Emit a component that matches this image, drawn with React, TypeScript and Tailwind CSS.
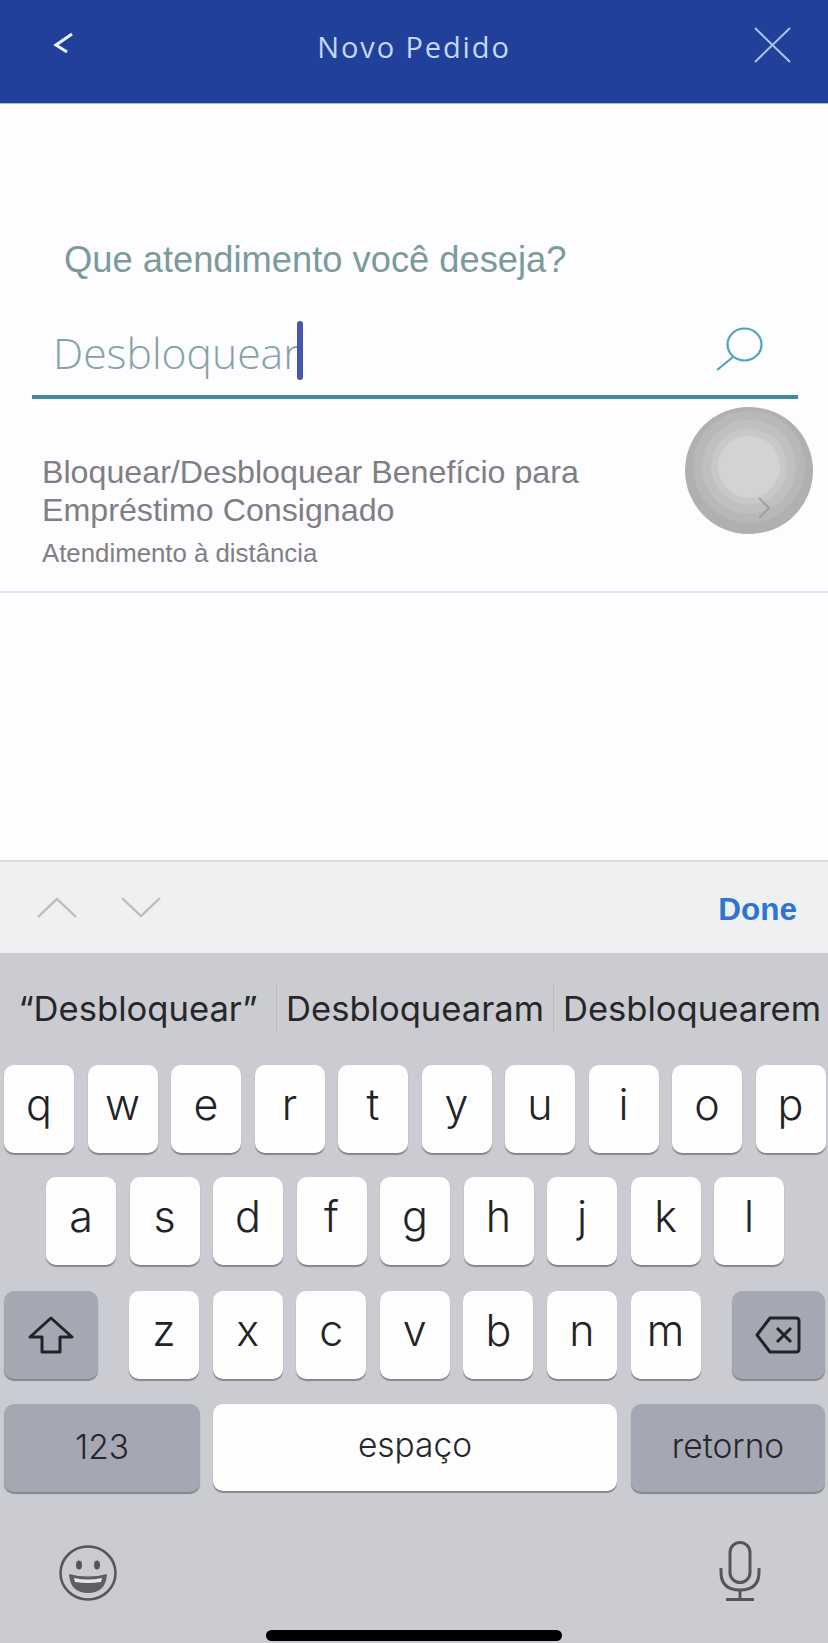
import React from 'react';

const row1 = ['q', 'w', 'e', 'r', 't', 'y', 'u', 'i', 'o', 'p'];
const row2 = ['a', 's', 'd', 'f', 'g', 'h', 'j', 'k', 'l'];
const row3 = ['z', 'x', 'c', 'v', 'b', 'n', 'm'];

function LetterKey({ label }: { label: string }) {
  return (
    <div className="w-[70px] h-[88px] shrink-0 flex items-center justify-center rounded-[10px] bg-[#fefefe] shadow-[0_2px_1px_#85868b] font-['Inter',sans-serif] text-[43px] leading-none font-light text-[#222326] pb-[9px]">
      {label}
    </div>
  );
}

export default function App() {
  return (
    <div className="w-[828px] h-[1643px] flex flex-col overflow-hidden bg-[#fdfcfe] font-['Liberation_Sans',sans-serif]">
      {/* header */}
      <header className="h-[104px] shrink-0 flex items-start justify-between pl-[53px] pr-[37px] bg-[#21409a] border-b border-[#a9bbe0]">
        <svg className="mt-[32px]" width="21" height="21" viewBox="0 0 21 21" fill="none">
          <path d="M19 2 L3 13 L14 20" stroke="#eef3ff" strokeWidth="3" />
        </svg>
        <h1 className="mt-[29px] font-['Open_Sans',sans-serif] text-[29px] leading-[36px] tracking-[1.9px] text-[#c3d7f7]">Novo Pedido</h1>
        <svg className="mt-[27px]" width="37" height="36" viewBox="0 0 37 36" fill="none" stroke="#a9c3ee" strokeWidth="2">
          <path d="M1 1 L36 35 M36 1 L1 35" />
        </svg>
      </header>

      {/* search */}
      <p className="mt-[136px] ml-[64px] text-[36.3px] leading-[40px] text-[#7a9a9c]">Que atendimento você deseja?</p>
      <div className="mt-[28px] mx-[32px] w-[766px] h-[91px] flex items-start justify-between pl-[21px] pr-[35px] border-b-[4px] border-[#3d8ba5]">
        <div className="flex items-start">
          <span className="mt-[18px] font-['Open_Sans',sans-serif] font-light text-[42.7px] leading-[54px] text-[#85a4a6]">Desbloquear</span>
          <span className="mt-[13px] -ml-[3px] w-[6px] h-[59px] rounded-[3px] bg-[#4655ad]" />
        </div>
        <svg className="mt-[19px]" width="48" height="44" viewBox="0 0 48 44" fill="none" stroke="#4ea3bd" strokeWidth="2.2">
          <ellipse cx="29.5" cy="17.5" rx="17" ry="16" />
          <path d="M18 30 L2 43" />
        </svg>
      </div>

      {/* result row */}
      <div className="relative h-[194px] shrink-0 pl-[42px] pt-[54px] border-b-2 border-[#e6e6ea]">
        <p className="text-[32.2px] leading-[38px] text-[#7f7f83]">Bloquear/Desbloquear Benefício para</p>
        <p className="text-[32.2px] leading-[38px] text-[#7f7f83]">Empréstimo Consignado</p>
        <p className="mt-[9px] text-[25.8px] leading-[30px] text-[#7f7f83]">Atendimento à distância</p>
        {/* touch indicator */}
        <div className="absolute left-[685px] top-[8px] w-[128px] h-[127px] rounded-full bg-[radial-gradient(circle_at_50%_47%,#d3d3d5_0,#d3d3d5_30px,#c8c8ca_32px,#c8c8ca_37px,#c0c0c2_39px,#c0c0c2_46px,#b8b8ba_48px,#b8b8ba_55px,#b0b0b2_57px)]">
          <svg className="absolute left-[71px] top-[90px]" width="16" height="22" viewBox="0 0 16 22" fill="none" stroke="#a0a0a2" strokeWidth="2">
            <path d="M3 1 L13 11 L3 21" />
          </svg>
        </div>
      </div>

      <div className="flex-1" />

      {/* accessory bar */}
      <div className="h-[93px] shrink-0 relative flex items-center pl-[37px] pr-[31px] bg-[#eff0f2] border-t-2 border-[#dcdcdf]">
        <svg width="40" height="21" viewBox="0 0 40 21" fill="none" stroke="#bdbdc0" strokeWidth="2.4">
          <path d="M1 20 L20 2 L39 20" />
        </svg>
        <svg className="ml-[44px]" width="40" height="21" viewBox="0 0 40 21" fill="none" stroke="#bdbdc0" strokeWidth="2.4">
          <path d="M1 1 L20 19 L39 1" />
        </svg>
        <span className="ml-auto mt-[3px] text-[31.5px] leading-[36px] font-bold text-[#2f74cf]">Done</span>
      </div>

      {/* keyboard */}
      <div className="h-[690px] shrink-0 flex flex-col bg-[#cbccd1]">
        <div className="h-[112px] shrink-0 flex items-center font-['Inter',sans-serif] text-[#26272a] text-[34.6px] leading-[40px] pb-[2px]">
          <div className="w-[276px] text-center">“Desbloquear”</div>
          <div className="w-px h-[50px] bg-[#b9babf]" />
          <div className="w-[276px] text-center">Desbloquearam</div>
          <div className="w-px h-[50px] bg-[#b9babf]" />
          <div className="flex-1 pl-[2px] text-center whitespace-nowrap">Desbloquearem</div>
        </div>

        <div className="flex gap-[13.5px] pl-[4px]">
          {row1.map((k) => <LetterKey key={k} label={k} />)}
        </div>
        <div className="flex gap-[13.5px] pl-[46px] mt-[24px]">
          {row2.map((k) => <LetterKey key={k} label={k} />)}
        </div>
        <div className="flex mt-[26px] pl-[4px]">
          <div className="w-[94px] h-[88px] flex items-center justify-center rounded-[10px] bg-[#a5a8b3] shadow-[0_2px_1px_#85868b]">
            <svg width="46" height="38" viewBox="0 0 46 38" fill="none" stroke="#222326" strokeWidth="3" strokeLinejoin="round">
              <path d="M23 2 L44 21 L32 21 L32 36 L14 36 L14 21 L2 21 Z" />
            </svg>
          </div>
          <div className="flex gap-[13.6px] ml-[31px]">
            {row3.map((k) => <LetterKey key={k} label={k} />)}
          </div>
          <div className="ml-[31px] w-[93px] h-[88px] flex items-center justify-center rounded-[10px] bg-[#a5a8b3] shadow-[0_2px_1px_#85868b]">
            <svg width="46" height="38" viewBox="0 0 46 38" fill="none" stroke="#222326" strokeWidth="3" strokeLinejoin="round">
              <path d="M15 2 L41 2 Q44 2 44 5 L44 33 Q44 36 41 36 L15 36 L2 19 Z" />
              <path d="M22 12 L36 26 M36 12 L22 26" />
            </svg>
          </div>
        </div>
        <div className="flex mt-[25px] pl-[4px] text-[#26272a] font-['Inter',sans-serif] text-[33.5px] leading-none font-light">
          <div className="w-[196px] h-[88px] flex items-center justify-center rounded-[10px] bg-[#a5a8b3] shadow-[0_2px_1px_#85868b]">123</div>
          <div className="ml-[13px] w-[404px] h-[87px] flex items-center justify-center rounded-[10px] bg-[#fefefe] shadow-[0_2px_1px_#85868b] pb-[3px]">espaço</div>
          <div className="ml-[14px] w-[194px] h-[88px] flex items-center justify-center rounded-[10px] bg-[#a5a8b3] shadow-[0_2px_1px_#85868b] pb-[3px]">retorno</div>
        </div>

        <div className="flex items-start justify-between pl-[59px] pr-[67px] mt-[49px]">
          <svg className="mt-[4px]" width="58" height="56" viewBox="0 0 58 56" fill="none">
            <ellipse cx="29" cy="28" rx="27.5" ry="26.5" stroke="#55565a" strokeWidth="2.5" />
            <ellipse cx="20" cy="20" rx="3" ry="4.5" fill="#55565a" />
            <ellipse cx="38" cy="20" rx="3" ry="4.5" fill="#55565a" />
            <path d="M10 29 Q29 34 48 29 Q47 48 29 48 Q11 48 10 29 Z" fill="#5e5f63" />
            <path d="M15 33 Q29 36 43 33 L42 37 Q29 39 16 37 Z" fill="#e8e8ea" />
          </svg>
          <svg width="42" height="60" viewBox="0 0 42 60" fill="none" stroke="#55565a" strokeWidth="3">
            <rect x="11" y="1.5" width="20" height="40" rx="10" />
            <path d="M2 27 L2 31 Q2 49 21 49 Q40 49 40 31 L40 27" />
            <path d="M21 49 L21 58 M7 58.5 L35 58.5" />
          </svg>
        </div>
        <div className="mt-auto mb-[2px] mx-auto w-[296px] h-[11px] rounded-full bg-black" />
      </div>
    </div>
  );
}
